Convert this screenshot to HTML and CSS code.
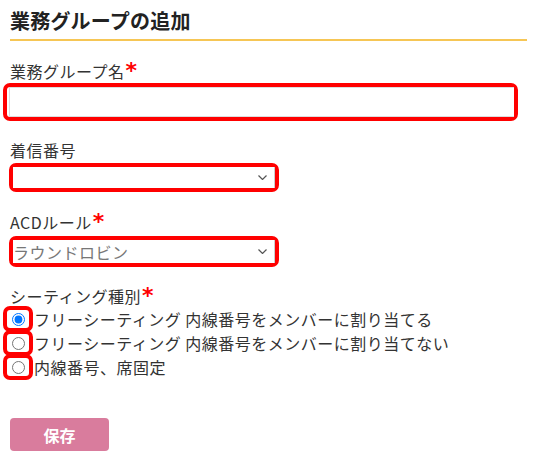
FILE: index.html
```html
<!DOCTYPE html>
<html lang="ja">
    <head>
        <meta charset="UTF-8">
        <meta name="viewport" content="width=device-width, initial-scale=1.0">
        <title>業務グループの追加</title>
        <link rel="stylesheet" href="styles.css">
    </head>
    <body>
        <div class="page">
            <h1 class="title">業務グループの追加</h1>

            <div class="field f-name">
                <label class="label" for="name">業務グループ名<span class="req">*</span></label>
                <div class="mark mark-input">
                    <input type="text" id="name" class="text-input">
                </div>
            </div>

            <div class="field f-tel">
                <label class="label" for="tel">着信番号</label>
                <div class="mark mark-select">
                    <div class="select-wrap">
                        <select id="tel" class="select"><option></option></select>
                        <svg class="chev" viewBox="0 0 9 5"><path d="M0.5 0.5 L4.5 4.5 L8.5 0.5" fill="none" stroke="#555" stroke-width="1.2"/></svg>
                    </div>
                </div>
            </div>

            <div class="field f-acd">
                <label class="label" for="acd">ACDルール<span class="req">*</span></label>
                <div class="mark mark-select mark-select2">
                    <div class="select-wrap">
                        <select id="acd" class="select"><option>ラウンドロビン</option></select>
                        <svg class="chev" viewBox="0 0 9 5"><path d="M0.5 0.5 L4.5 4.5 L8.5 0.5" fill="none" stroke="#555" stroke-width="1.2"/></svg>
                    </div>
                </div>
            </div>

            <div class="field f-seat">
                <div class="label">シーティング種別<span class="req">*</span></div>
                <label class="radio-row">
                    <span class="mark mark-radio"><input type="radio" name="seat" checked></span>フリーシーティング 内線番号をメンバーに割り当てる
                </label>
                <label class="radio-row">
                    <span class="mark mark-radio"><input type="radio" name="seat"></span>フリーシーティング 内線番号をメンバーに割り当てない
                </label>
                <label class="radio-row">
                    <span class="mark mark-radio"><input type="radio" name="seat"></span>内線番号、席固定
                </label>
            </div>

            <button class="btn-save">保存</button>
        </div>
    </body>
</html>
```

FILE: styles.css
```css
*{
    margin: 0;
    padding: 0;
    box-sizing: border-box;
}
body{
    font-family: "Noto Sans CJK JP", "Noto Sans", sans-serif;
    color: #333;
    background-color: #fff;
}
.page{
    padding: 0 6px 0 10px;
}
.title{
    font-size: 20px;
    line-height: 26px;
    font-weight: bold;
    color: #222;
    letter-spacing: 0.2px;
    padding: 8px 0 5px;
    border-bottom: 2px solid #f6c655;
}
.label{
    display: block;
    font-size: 16px;
    line-height: 22px;
    letter-spacing: 0.5px;
}
.req{
    color: #f00;
    font-family: "DejaVu Sans", sans-serif;
    font-size: 22px;
    font-weight: bold;
    line-height: 0;
    margin-left: 1px;
}
.mark{
    border: 4px solid #f00;
    border-radius: 7px;
    background-color: #fff;
}
.f-name{
    margin-top: 19px;
}
.mark-input{
    margin: 1px 0 0 -7px;
    width: 515px;
    height: 38px;
    padding-left: 2px;
}
.text-input{
    display: block;
    width: 100%;
    height: 100%;
    border: 1px solid #ddd;
    border-right: none;
    outline: none;
    font: inherit;
}
.f-tel{
    margin-top: 18px;
}
.mark-select{
    margin: 2px 0 0 -1px;
    width: 270px;
    height: 29px;
}
.mark-select2{
    margin-top: 3px;
    height: 31px;
}
.select-wrap{
    display: flex;
    align-items: center;
    height: 100%;
}
.select{
    appearance: none;
    flex: 1;
    min-width: 0;
    height: 100%;
    border: none;
    border-right: 1px solid #ccc;
    background-color: #fff;
    font-family: inherit;
    font-size: 16px;
    letter-spacing: 0.5px;
    color: #777;
    padding-left: 0;
    outline: none;
}
.chev{
    width: 9px;
    height: 5px;
    margin-left: -17px;
    margin-right: 8px;
}
.f-acd{
    margin-top: 19px;
}
.f-seat{
    margin-top: 18px;
}
.radio-row{
    display: flex;
    align-items: center;
    height: 24px;
    font-size: 16px;
    letter-spacing: 0.5px;
    white-space: nowrap;
}
.mark-radio{
    display: flex;
    align-items: center;
    justify-content: center;
    flex: none;
    width: 30px;
    height: 26px;
    margin-left: -7px;
    margin-right: 1px;
}
.mark-radio input{
    width: 13px;
    height: 13px;
    margin: 0;
}
.btn-save{
    display: block;
    margin-top: 39px;
    width: 99px;
    height: 33px;
    border: none;
    border-radius: 4px;
    background-color: #d97c9d;
    color: #fff;
    font-family: "Noto Sans CJK JP", sans-serif;
    font-size: 16px;
    font-weight: bold;
}
```
